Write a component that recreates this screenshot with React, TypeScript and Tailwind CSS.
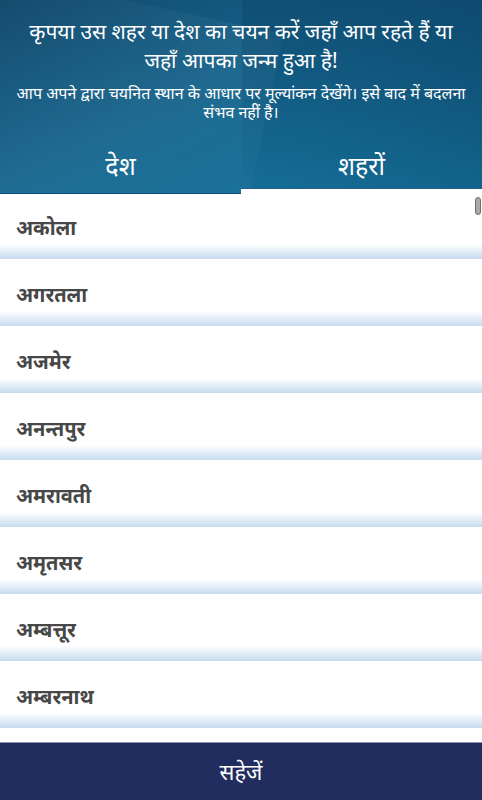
import React from 'react'

const cities = ['अकोला', 'अगरतला', 'अजमेर', 'अनन्तपुर', 'अमरावती', 'अमृतसर', 'अम्बत्तूर', 'अम्बरनाथ']

export default function App() {
  return (
    <div className="w-[482px] h-[800px] flex flex-col bg-white overflow-hidden relative" style={{ fontFamily: '"Noto Sans", "Lohit Devanagari", sans-serif' }}>
      {/* Header */}
      <div className="relative h-[194px] shrink-0 bg-gradient-to-br from-[#124a6d] via-[#14658e] to-[#1678a2] overflow-hidden">
        <div className="absolute -left-10 top-0 w-[300px] h-[260px] bg-gradient-to-br from-transparent via-[#ffffff0d] to-transparent rotate-12" />
        <div className="absolute right-0 top-0 w-[240px] h-[194px] bg-gradient-to-bl from-[#0b3d60aa] to-transparent" />
        <div className="relative flex flex-col items-center text-white text-center">
          <h1 className="mt-[17px] px-6 text-[21px] leading-[29px]">
            कृपया उस शहर या देश का चयन करें जहाँ आप रहते हैं या जहाँ आपका जन्म हुआ है!
          </h1>
          <p className="mt-[9px] px-[14px] text-[16px] leading-[19px]">
            आप अपने द्वारा चयनित स्थान के आधार पर मूल्यांकन देखेंगे। इसे बाद में बदलना संभव नहीं है।
          </p>
        </div>
        <div className="absolute left-0 right-0 bottom-0 flex h-[58px]">
          <div className="w-[241px] flex items-start justify-center border-b border-[#0b4f80]">
            <span className="text-white text-[25px] leading-[34px] mt-[12px]">देश</span>
          </div>
          <div className="flex-1 flex flex-col">
            <div className="h-[52px] flex items-start justify-center">
              <span className="text-white text-[25px] leading-[34px] mt-[12px]">शहरों</span>
            </div>
            <div className="h-[6px] bg-white border-t border-[#2a5f85]" />
          </div>
        </div>
      </div>

      {/* List */}
      <div className="relative flex-1 flex flex-col">
        {cities.map((c) => (
          <div key={c} className="h-[67px] flex flex-col border-b-2 border-white">
            <div className="h-[50px] flex items-center pl-4 pt-[18px]">
              <span className="text-[20px] font-bold text-[#474747]">{c}</span>
            </div>
            <div className="flex-1 bg-gradient-to-b from-white to-[#c6dcef]" />
          </div>
        ))}
        <div className="absolute right-[1px] top-[3px] w-[6px] h-[18px] rounded-full bg-[#a9a9a9] border border-[#6f6f6f]" />
      </div>

      {/* Footer */}
      <div className="h-[58px] shrink-0 bg-[#222d5f] border-t border-[#8a8fb0] flex items-center justify-center">
        <span className="text-white text-[22px]">सहेजें</span>
      </div>
    </div>
  )
}
